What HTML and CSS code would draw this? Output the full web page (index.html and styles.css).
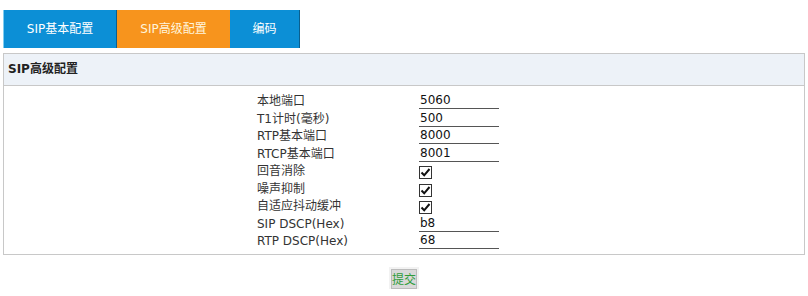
FILE: index.html
```html
<!DOCTYPE html>
<html lang="zh-CN">
<head>
    <meta charset="UTF-8">
    <title>SIP高级配置</title>
    <link rel="stylesheet" href="styles.css">
</head>
<body>
    <div class="tabs">
        <div class="tab first">SIP基本配置</div>
        <div class="tab active">SIP高级配置</div>
        <div class="tab last">编码</div>
    </div>
    <div class="panel">
        <div class="panel-title">SIP高级配置</div>
        <div class="form">
            <label>本地端口</label>
            <div><input class="field" type="text" value="5060"></div>
            <label>T1计时(毫秒)</label>
            <div><input class="field" type="text" value="500"></div>
            <label>RTP基本端口</label>
            <div><input class="field" type="text" value="8000"></div>
            <label>RTCP基本端口</label>
            <div><input class="field" type="text" value="8001"></div>
            <label>回音消除</label>
            <div><span class="check"><svg width="11" height="11" viewBox="0 0 11 11"><path d="M1.5 5.5 L4.2 8.3 L9.5 2" fill="none" stroke="#111" stroke-width="2"/></svg></span></div>
            <label>噪声抑制</label>
            <div><span class="check"><svg width="11" height="11" viewBox="0 0 11 11"><path d="M1.5 5.5 L4.2 8.3 L9.5 2" fill="none" stroke="#111" stroke-width="2"/></svg></span></div>
            <label>自适应抖动缓冲</label>
            <div><span class="check"><svg width="11" height="11" viewBox="0 0 11 11"><path d="M1.5 5.5 L4.2 8.3 L9.5 2" fill="none" stroke="#111" stroke-width="2"/></svg></span></div>
            <label>SIP DSCP(Hex)</label>
            <div><input class="field" type="text" value="b8"></div>
            <label>RTP DSCP(Hex)</label>
            <div><input class="field" type="text" value="68"></div>
        </div>
    </div>
    <div class="actions">
        <button class="submit">提交</button>
    </div>
</body>
</html>
```

FILE: styles.css
```css
body {
    margin: 0;
    padding: 10px 3px 0 3px;
    font-family: "DejaVu Sans", "Noto Sans CJK SC", sans-serif;
    font-size: 12px;
    color: #333;
    background: #fff;
}

.tabs {
    display: flex;
    height: 38px;
}

.tab {
    background: #0c8fd6;
    color: #fff;
    line-height: 38px;
    text-align: center;
    border-right: 1px solid #0a5f8f;
}

.tab.first {
    width: 112px;
    border-left: 1px solid #7fcdf0;
}

.tab.active {
    width: 113px;
    background: #f7941d;
    color: #fff4dc;
    border-right: none;
}

.tab.last {
    width: 69px;
}

.panel {
    margin-top: 5px;
    border: 1px solid #c8c8c8;
}

.panel-title {
    height: 31px;
    line-height: 31px;
    padding-left: 4px;
    background: #edf2f8;
    border-bottom: 1px solid #c8c8c8;
    font-weight: bold;
    color: #222;
}

.form {
    display: grid;
    grid-template-columns: 162px 132px;
    grid-auto-rows: 17.5px;
    justify-content: center;
    padding: 6px 0 4px 0;
}

.form label {
    line-height: 18px;
    white-space: nowrap;
}

.field {
    width: 78px;
    height: 16px;
    margin: 0;
    padding: 0 1px;
    border: none;
    border-bottom: 1px solid #555;
    font-family: "DejaVu Sans", sans-serif;
    font-size: 12px;
    color: #111;
    background: transparent;
    outline: none;
}

.check {
    display: inline-flex;
    align-items: center;
    justify-content: center;
    width: 11px;
    height: 11px;
    margin-top: 4px;
    border: 1px solid #333;
    background: #fff;
}

.actions {
    display: flex;
    justify-content: center;
    margin-top: 14px;
}

.submit {
    width: 26px;
    height: 20px;
    padding: 0;
    border: 1px solid #bcbcbc;
    outline: 2px solid #f2f2f2;
    background: #d9d9d9;
    color: #2f9c3a;
    font-family: "Noto Sans CJK SC", sans-serif;
    font-size: 12px;
}
```
